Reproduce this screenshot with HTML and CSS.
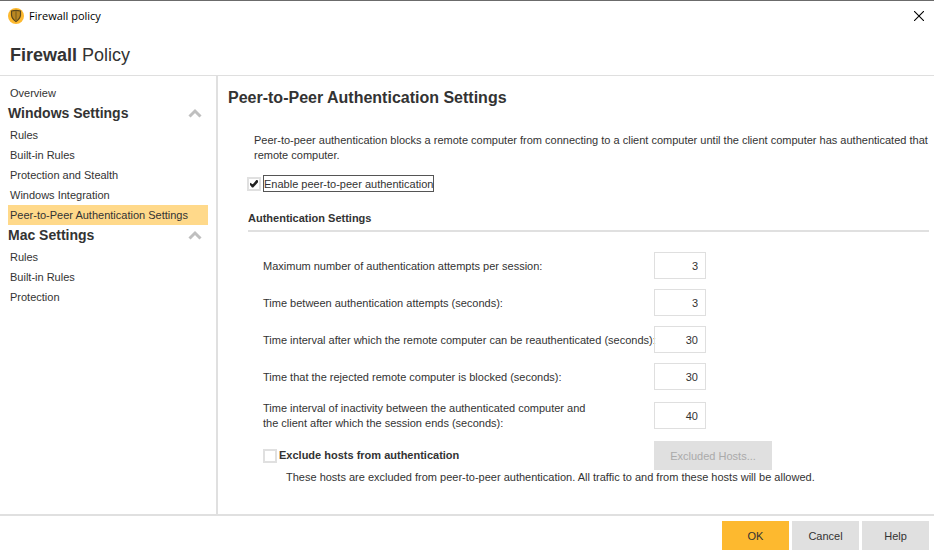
FILE: index.html
```
<!DOCTYPE html>
<html lang="en">
<head>
  <meta charset="UTF-8" />
  <meta name="viewport" content="width=device-width, initial-scale=1.0"/>
  <title>Firewall policy</title>
  <link rel="stylesheet" href="styles.css">
</head>
<body>
  <div class="window">

    <div class="titlebar">
      <svg class="app-icon" viewBox="0 0 16 16">
        <circle cx="8" cy="8" r="8" fill="#fdb92f"/>
        <path d="M3.5 3Q8 1.8 12.5 3V7.200Q12 11 8 13.600Q4 11 3.500 7.200Z" fill="#b98722" stroke="#5a471c" stroke-width="1.200"/>
        <path d="M8 3V12.500" stroke="#96701f" stroke-width="2"/>
      </svg>
      <span class="titlebar-text">Firewall policy</span>
      <button type="button" class="close-button" aria-label="Close">
        <svg class="close-icon" viewBox="0 0 10 10">
          <path d="M0 0L10 10M10 0L0 10" stroke="#000" stroke-width="1.1"/>
        </svg>
      </button>
    </div>

    <h1 class="policy-title"><strong>Firewall</strong> Policy</h1>

    <div class="content">
      <nav class="sidebar">
        <a href="#" class="nav-item">Overview</a>
        <button type="button" class="nav-group">
          Windows Settings
          <svg class="chevron" viewBox="0 0 14 10"><path d="M1.500 8.500L7 3L12.500 8.500" fill="none" stroke="#bfbfbf" stroke-width="3"/></svg>
        </button>
        <a href="#" class="nav-item">Rules</a>
        <a href="#" class="nav-item">Built-in Rules</a>
        <a href="#" class="nav-item">Protection and Stealth</a>
        <a href="#" class="nav-item">Windows Integration</a>
        <a href="#" class="nav-item active">Peer-to-Peer Authentication Settings</a>
        <button type="button" class="nav-group">
          Mac Settings
          <svg class="chevron" viewBox="0 0 14 10"><path d="M1.500 8.500L7 3L12.500 8.500" fill="none" stroke="#bfbfbf" stroke-width="3"/></svg>
        </button>
        <a href="#" class="nav-item">Rules</a>
        <a href="#" class="nav-item">Built-in Rules</a>
        <a href="#" class="nav-item">Protection</a>
      </nav>

      <main class="main">
        <h2 class="page-title">Peer-to-Peer Authentication Settings</h2>
        <p class="intro">Peer-to-peer authentication blocks a remote computer from connecting to a client computer until the client computer has authenticated that remote computer.</p>

        <div class="check-row">
          <input type="checkbox" id="enable" class="checkbox" checked>
          <label for="enable" class="focused">Enable peer-to-peer authentication</label>
        </div>

        <h3 class="section-title">Authentication Settings</h3>

        <div class="settings">
          <div class="setting">
            <label for="attempts" class="setting-label">Maximum number of authentication attempts per session:</label>
            <input type="text" id="attempts" class="number" value="3">
          </div>
          <div class="setting">
            <label for="between" class="setting-label">Time between authentication attempts (seconds):</label>
            <input type="text" id="between" class="number" value="3">
          </div>
          <div class="setting">
            <label for="reauth" class="setting-label">Time interval after which the remote computer can be reauthenticated (seconds):</label>
            <input type="text" id="reauth" class="number" value="30">
          </div>
          <div class="setting">
            <label for="blocked" class="setting-label">Time that the rejected remote computer is blocked (seconds):</label>
            <input type="text" id="blocked" class="number" value="30">
          </div>
          <div class="setting">
            <label for="inactivity" class="setting-label">Time interval of inactivity between the authenticated computer and<br>the client after which the session ends (seconds):</label>
            <input type="text" id="inactivity" class="number" value="40">
          </div>
          <div class="setting">
            <div class="check-row exclude">
              <input type="checkbox" id="exclude" class="checkbox">
              <label for="exclude">Exclude hosts from authentication</label>
            </div>
            <button type="button" class="button hosts-button" disabled>Excluded Hosts...</button>
          </div>
        </div>

        <p class="note">These hosts are excluded from peer-to-peer authentication. All traffic to and from these hosts will be allowed.</p>
      </main>
    </div>

    <div class="footer">
      <button type="button" class="button primary">OK</button>
      <button type="button" class="button">Cancel</button>
      <button type="button" class="button">Help</button>
    </div>

  </div>
</body>
</html>
```
FILE: styles.css
```
* {
  box-sizing: border-box;
}

body {
  margin: 0;
  font-family: "Liberation Sans", Arial, sans-serif;
  font-size: 11px;
  line-height: 15px;
  color: #333;
  background-color: #fff;
}

h1, h2, h3, p {
  margin: 0;
}

button, input {
  font-family: inherit;
  font-size: inherit;
  color: inherit;
}

.window {
  display: flex;
  flex-direction: column;
  min-height: 100vh;
  border-top: 1px solid #6b6b6b;
}

.titlebar {
  display: flex;
  align-items: center;
  height: 29px;
  padding: 0 10px 0 8px;
  color: #000;
}

.app-icon {
  width: 16px;
  height: 16px;
  margin-right: 5px;
}

.titlebar-text {
  flex: 1;
  padding-bottom: 1px;
  font-family: "Open Sans", "Noto Sans", sans-serif;
  font-size: 11px;
}

.close-button {
  display: flex;
  padding: 0;
  border: none;
  background: none;
}

.close-icon {
  width: 10px;
  height: 10px;
}

.policy-title {
  padding: 15px 10px 10px;
  border-bottom: 1px solid #dfdfdf;
  font-size: 18px;
  line-height: 20px;
  font-weight: normal;
}

.content {
  display: flex;
  flex: 1;
}

.sidebar {
  flex: 0 0 218px;
  padding: 7px 8px 0;
  border-right: 2px solid #e0e0e0;
}

.nav-item {
  display: block;
  padding-left: 2px;
  line-height: 20px;
  color: inherit;
  text-decoration: none;
}

.nav-item.active {
  background-color: #ffd98a;
}

.nav-group {
  display: flex;
  justify-content: space-between;
  align-items: center;
  width: 100%;
  height: 22px;
  padding: 0 6px 2px 0;
  border: none;
  background: none;
  font-size: 14px;
  font-weight: bold;
}

.chevron {
  width: 14px;
  height: 10px;
}

.main {
  flex: 1;
  padding: 12px 5px 0 10px;
}

.page-title {
  font-size: 16px;
  line-height: 20px;
}

.intro {
  padding: 25px 0 12px 26px;
}

.check-row {
  display: flex;
  align-items: center;
  gap: 2px;
  padding-left: 19px;
}

.checkbox {
  appearance: none;
  display: grid;
  place-items: center;
  width: 14px;
  height: 14px;
  margin: 0;
  border: 2px solid #e0e0e0;
  background-color: #fff;
}

.checkbox:checked::before {
  content: "";
  width: 8px;
  height: 8px;
  background-color: #222;
  clip-path: polygon(0 40%, 35% 60%, 85% 0, 100% 15%, 100% 35%, 40% 100%, 25% 100%, 0 70%);
}

.focused {
  padding-top: 1px;
  border: 1px solid #555;
  line-height: 14px;
}

.section-title {
  margin: 19px 0 0 20px;
  padding-bottom: 4px;
  border-bottom: 2px solid #e0e0e0;
  font-size: 11px;
}

.settings {
  display: grid;
  gap: 10px;
  padding: 20px 0 0 35px;
}

.setting {
  display: grid;
  grid-template-columns: 391px auto;
  align-items: center;
  justify-content: start;
}

.setting-label {
  padding-top: 1px;
  white-space: nowrap;
}

.number {
  width: 52px;
  height: 27px;
  padding: 0 7px;
  border: 1px solid #dfdfdf;
  background: none;
  text-align: right;
}

.exclude {
  padding-left: 0;
  font-weight: bold;
}

.button {
  width: 67px;
  height: 29px;
  padding: 0;
  border: none;
  background-color: #e0e0e0;
}

.button:disabled {
  color: #aaa;
}

.hosts-button {
  width: 118px;
}

.note {
  padding-left: 58px;
}

.primary {
  background-color: #fdb92f;
}

.footer {
  display: flex;
  justify-content: flex-end;
  gap: 3px;
  padding: 5px 5px 3px;
  border-top: 2px solid #e0e0e0;
}
```
